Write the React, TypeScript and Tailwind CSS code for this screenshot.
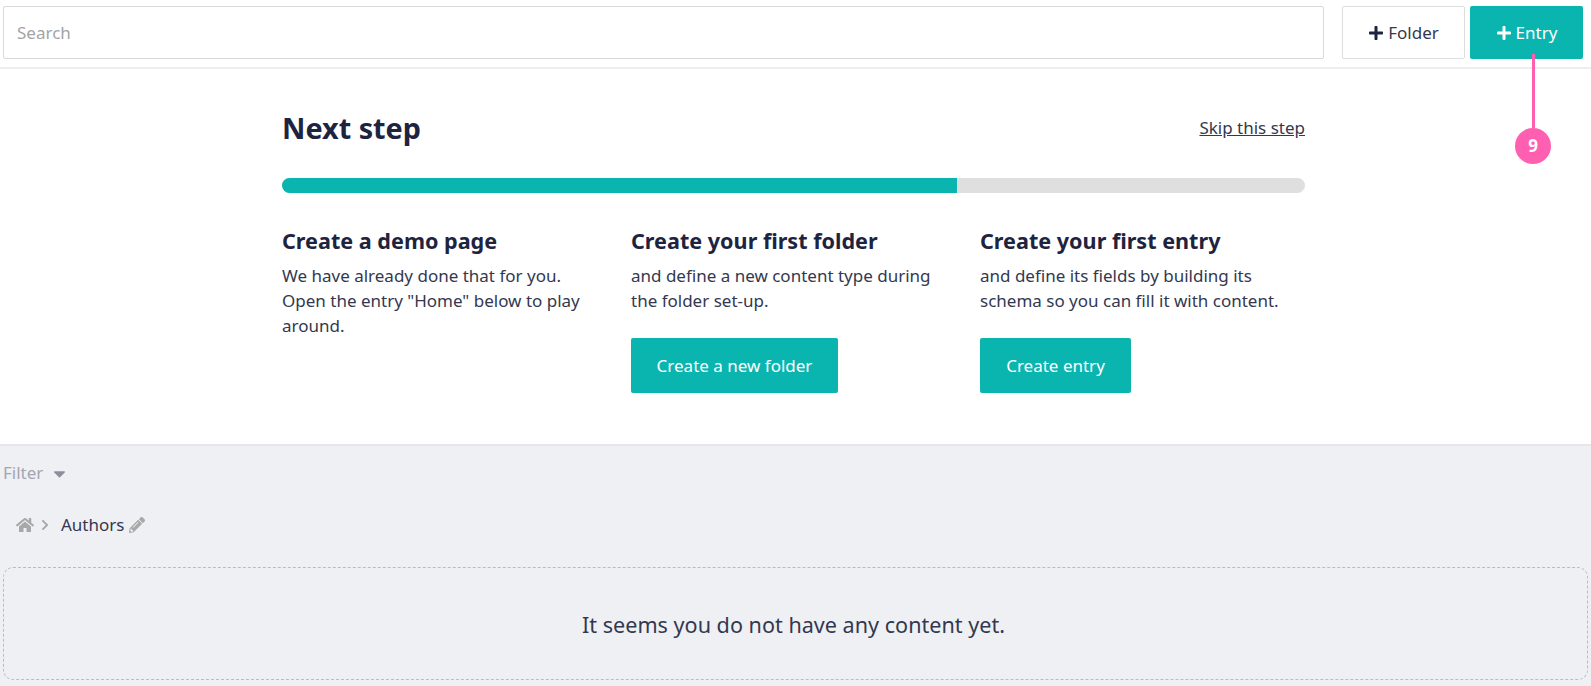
import { FaPlus, FaHome, FaChevronRight, FaPencilAlt, FaCaretDown } from "react-icons/fa";

function Step({ title, lines, button, width }: { title: string; lines: string; button?: string; width?: string }) {
  return (
    <div className="w-[349px] shrink-0 pr-[40px]">
      <h3 className="pt-[1px] text-[21.6px] leading-[30px] font-bold text-[#1e2440]">{title}</h3>
      <p className="mt-[7px] text-[17px] leading-[25px] text-[#33384f]">{lines}</p>
      {button && (
        <button className={`mt-[25px] h-[55px] rounded-[2px] bg-[#0ab5b0] text-[17px] text-white ${width}`}>{button}</button>
      )}
    </div>
  );
}

export default function App() {
  return (
    <div className="relative h-[686px] w-[1591px] overflow-hidden bg-white font-['Noto_Sans','Open_Sans',sans-serif] text-[#33384f]">
      <header className="flex h-[69px] gap-[5px] border-b-2 border-[#eeeeee] pl-[3px] pr-[8px] pt-[6px] pb-[8px]">
        <input
          placeholder="Search"
          className="mr-[13px] h-[53px] flex-1 rounded-[2px] border border-[#d9d9d9] px-[13px] text-[17px] placeholder:text-[#a3a3a8]"
        />
        <button className="flex h-[53px] w-[123px] items-center justify-center gap-[4px] rounded-[2px] border border-[#dddddd] bg-white text-[17px] text-[#33384f]">
          <FaPlus size={16} className="text-[#1e2440]" />
          Folder
        </button>
        <button className="flex h-[53px] w-[113px] items-center justify-center gap-[4px] rounded-[2px] bg-[#0ab5b0] text-[17px] text-white">
          <FaPlus size={16} />
          Entry
        </button>
      </header>

      <section className="h-[377px] border-b-2 border-[#e6e7eb] pl-[282px] pt-[36px]">
        <div className="w-[1023px]">
          <div className="flex items-center justify-between">
            <h1 className="text-[28.8px] leading-[46px] font-bold text-[#1e2440]">Next step</h1>
            <a className="text-[17px] text-[#33384f] underline">Skip this step</a>
          </div>
          <div className="mt-[27px] h-[15px] overflow-hidden rounded-full bg-[#dfdfdf]">
            <div className="h-full w-[675px] bg-[#0ab5b0]" />
          </div>
          <div className="mt-[32px] flex">
            <Step title="Create a demo page" lines={'We have already done that for you. Open the entry "Home" below to play around.'} />
            <Step title="Create your first folder" lines="and define a new content type during the folder set-up." button="Create a new folder" width="w-[207px]" />
            <Step title="Create your first entry" lines="and define its fields by building its schema so you can fill it with content." button="Create entry" width="w-[151px]" />
          </div>
        </div>
      </section>

      <main className="h-[240px] bg-[#eff0f4] px-[3px]">
        <div className="mb-[3px] flex h-[54px] items-center gap-[7px] text-[17px] text-[#a3a6b0]">
          Filter
          <FaCaretDown size={19} className="text-[#8c8f9b]" />
        </div>
        <div className="flex h-[44px] items-center pl-[13px] text-[17px] text-[#33384f]">
          <FaHome size={18} className="text-[#a8a8a8]" />
          <FaChevronRight size={12} className="ml-[5px] mr-[10px] text-[#a8a8a8]" />
          Authors
          <FaPencilAlt size={16} className="ml-[5px] text-[#a8a8a8]" />
        </div>
        <div className="mt-[20px] flex h-[113px] items-center justify-center rounded-[10px] border border-dashed border-[#b9bbc4] pt-[3px] pr-[4px] text-[21.6px] text-[#33384f]">
          It seems you do not have any content yet.
        </div>
      </main>

      <div className="absolute left-[1532px] top-[54px] h-[74px] w-[3px] bg-[#ff5fb0]" />
      <div className="absolute left-[1515px] top-[128px] flex h-[36px] w-[36px] items-center justify-center rounded-full bg-[#ff5fb0] text-[17px] font-bold text-white">9</div>
    </div>
  );
}
